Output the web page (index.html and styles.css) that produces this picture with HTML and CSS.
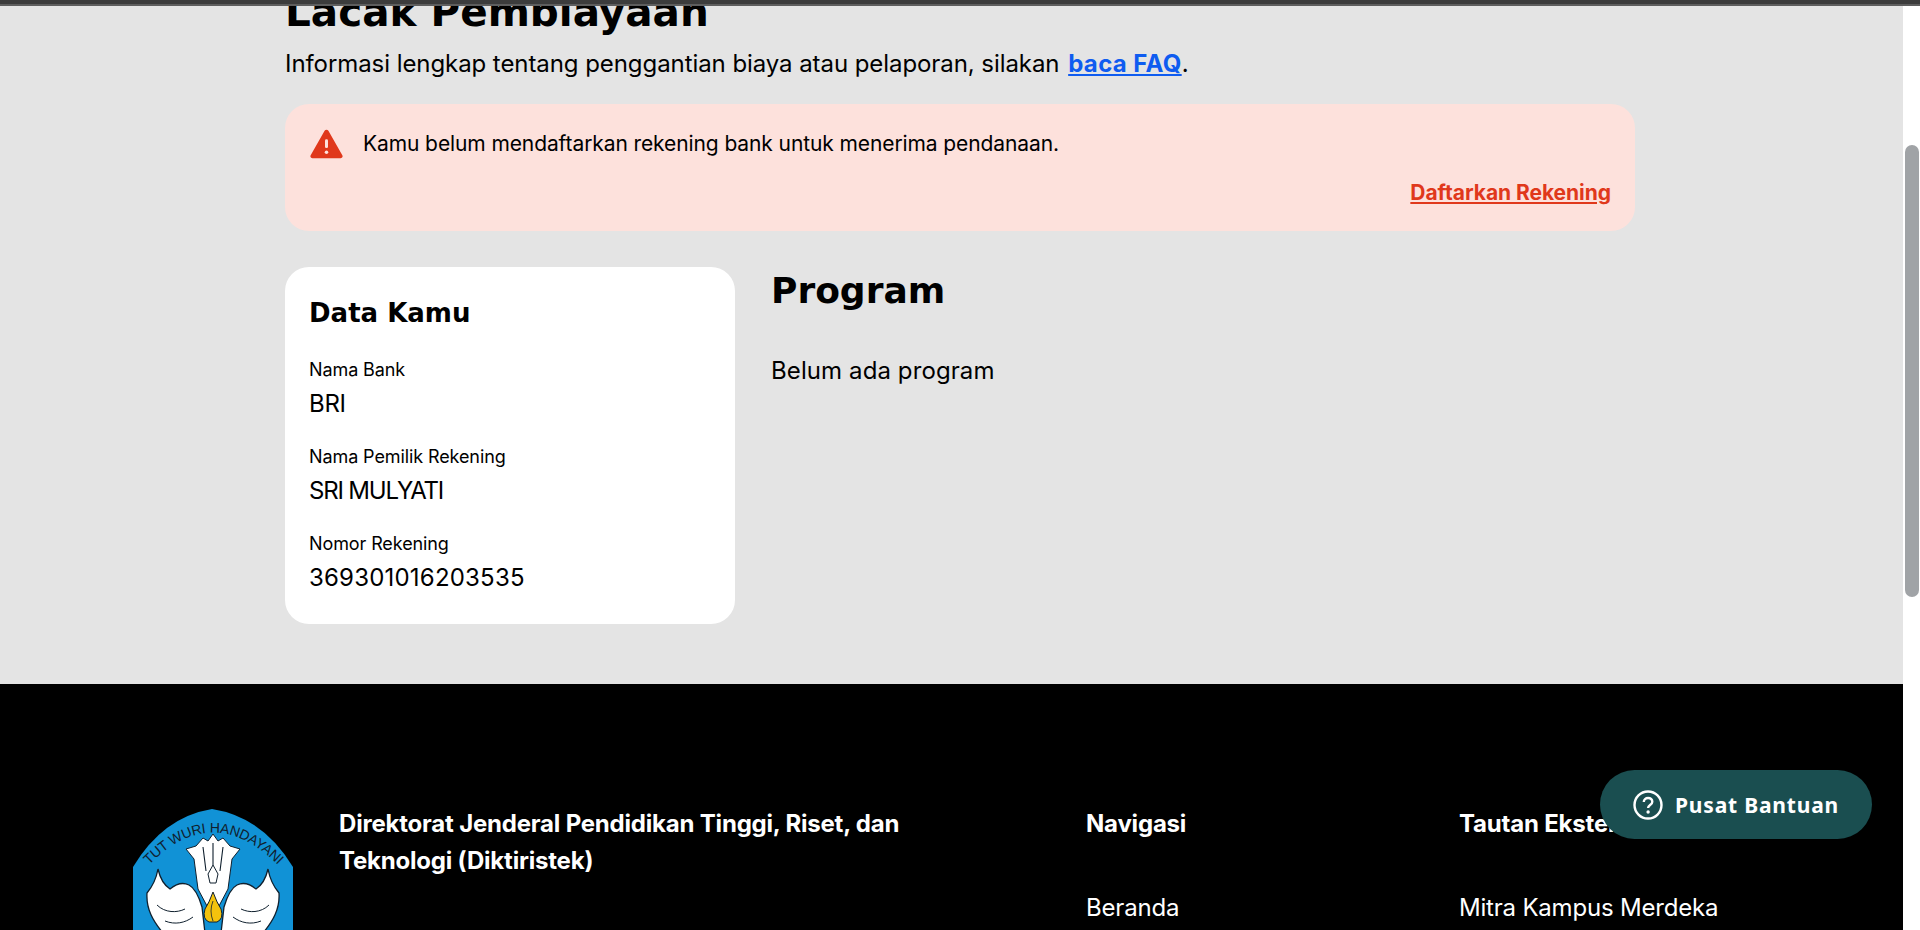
FILE: index.html
```html
<!DOCTYPE html>
<html lang="id">
<head>
<meta charset="utf-8">
<title>Lacak Pembiayaan</title>
<link rel="stylesheet" href="styles.css">
</head>
<body>
<div class="topbar"></div>
<div class="shell">
  <div class="viewport">
    <main class="content">
      <h1 class="title">Lacak Pembiayaan</h1>
      <p class="intro">Informasi lengkap tentang penggantian biaya atau pelaporan, silakan <a class="faq" href="#">baca FAQ</a>.</p>
      <section class="alert">
        <div class="alert-row">
          <svg class="alert-icon" viewBox="0 0 24 22"><path d="M12 0.5c.6 0 1.1.3 1.4.8l10.2 18c.6 1-.1 2.2-1.3 2.2H1.7C.5 21.500-.2 20.300.4 19.300l10.200-18c.3-.5.8-.8 1.400-.8z" fill="#e0381b"/><rect x="10.900" y="7.500" width="2.200" height="6.500" rx="1" fill="#fde1dc"/><circle cx="12" cy="17" r="1.300" fill="#fde1dc"/></svg>
          <span>Kamu belum mendaftarkan rekening bank untuk menerima pendanaan.</span>
        </div>
        <a class="alert-link" href="#">Daftarkan Rekening</a>
      </section>
      <div class="columns">
        <aside class="card">
          <h2 class="card-title">Data Kamu</h2>
          <dl class="fields">
            <div class="field"><dt>Nama Bank</dt><dd>BRI</dd></div>
            <div class="field"><dt>Nama Pemilik Rekening</dt><dd class="dd-name">SRI MULYATI</dd></div>
            <div class="field"><dt>Nomor Rekening</dt><dd class="dd-num">369301016203535</dd></div>
          </dl>
        </aside>
        <section class="program">
          <h2 class="program-title">Program</h2>
          <p class="program-empty">Belum ada program</p>
        </section>
      </div>
    </main>
    <footer class="footer">
      <svg class="logo" viewBox="0 0 160 170">
        <defs>
          <path id="arc" d="M15 57 Q80 -10 146 57"/>
          <g id="wing">
            <path d="M25 60 C27 69 31 76 37 80 C43 75 50 73 56 76 C62 79 66 88 69 98 L72 124 L30 124 C20 112 13 100 14 84 C19 78 23 71 25 60 Z" fill="#fff" stroke="#10202e" stroke-width="1.300"/>
            <path d="M24 96 C32 104 44 104 52 100 M32 112 C42 116 52 114 60 108" fill="none" stroke="#10202e" stroke-width="1"/>
          </g>
        </defs>
        <path d="M79 0 Q30 8 0 58 V125 Q8 165 80 170 Q152 165 160 125 V58 Q130 8 79 0 Z" fill="#1192d6"/>
        <text class="logo-text"><textPath href="#arc" startOffset="50%" text-anchor="middle">TUT WURI HANDAYANI</textPath></text>
        <use href="#wing"/>
        <use href="#wing" transform="translate(160 0) scale(-1 1)"/>
        <path d="M53 40 L63 37 L70 29 L75 32 L80 25 L85 32 L90 29 L97 37 L107 40 L99 50 L95 80 L86 97 L80 86 L74 97 L65 80 L61 50 Z" fill="#fff" stroke="#10202e" stroke-width="1"/>
        <path d="M70 38 L73 62 M80 34 V56 M90 38 L87 62" stroke="#10202e" stroke-width="1.100" fill="none"/>
        <path d="M80 56 L85 65 L83 74 L77 74 L75 65 Z" fill="#fff" stroke="#10202e" stroke-width="1"/>
        <path d="M80 83 Q84 94 88 100 Q91 110 84 113 H76 Q69 110 72 100 Q76 94 80 83 Z" fill="#f4c20d" stroke="#10202e" stroke-width="1"/>
        <path d="M80 92 Q76 102 80 112" fill="none" stroke="#10202e" stroke-width=".8"/>
      </svg>
      <div class="org">Direktorat Jenderal Pendidikan Tinggi, Riset, dan Teknologi (Diktiristek)</div>
      <nav class="foot-col nav-col">
        <h3>Navigasi</h3>
        <a href="#">Beranda</a>
      </nav>
      <nav class="foot-col ext-col">
        <h3>Tautan Eksternal</h3>
        <a href="#">Mitra Kampus Merdeka</a>
      </nav>
    </footer>
    <button class="help">
      <svg class="help-icon" viewBox="0 0 30 30"><circle cx="15" cy="15" r="13.500" fill="none" stroke="#fff" stroke-width="2.400"/><path d="M10.800 12c0-2.500 1.900-4 4.300-4s4.200 1.500 4.200 3.700c0 3.300-4.200 3.300-4.200 6.300" fill="none" stroke="#fff" stroke-width="2.400"/><circle cx="15.100" cy="22" r="1.700" fill="#fff"/></svg>
      <span class="help-label">Pusat Bantuan</span>
    </button>
  </div>
  <div class="scrollbar"><div class="thumb"></div></div>
</div>
</body>
</html>
```

FILE: styles.css
```css
* { box-sizing: border-box; }
html, body { margin: 0; height: 100%; overflow: hidden; }
body { display: flex; flex-direction: column; font-family: "Inter", "Liberation Sans", sans-serif; color: #000; background: #fff; }
.topbar { height: 6px; flex: none; background: linear-gradient(#3c3c3c 0 4px, #5e5e5e 4px); }
.shell { flex: 1; min-height: 0; display: flex; }
.viewport { position: relative; width: 1903px; overflow: hidden; background: #e4e4e4; }
.content { display: flow-root; height: 678px; padding: 0 268px 0 285px; }
.title { margin: -18px 0 0; font-family: "DejaVu Sans", sans-serif; font-size: 40.500px; line-height: 48px; font-weight: 700; }
.intro { margin: 11px 0 0; font-size: 24px; line-height: 34px; letter-spacing: -0.07px; }
.faq { margin-left: 2px; color: #0f5cf0; font-weight: 700; letter-spacing: 0.35px; }
.alert { margin-top: 23px; height: 127px; padding: 24px; background: #fde1dc; border-radius: 24px; display: flex; flex-direction: column; font-size: 21px; }
.alert-row { display: flex; align-items: center; gap: 20px; line-height: 32px; letter-spacing: -0.1px; }
.alert-icon { width: 33px; height: 30px; flex: none; margin-left: 1px; }
.alert-link { margin-top: 18px; align-self: flex-end; color: #e0381b; font-weight: 700; line-height: 30px; letter-spacing: -0.05px; }
.columns { margin-top: 36px; display: flex; gap: 36px; }
.card { width: 450px; height: 357px; padding: 25px 24px 24px; background: #fff; border-radius: 24px; }
.card-title { margin: 0; font-family: "DejaVu Sans", sans-serif; font-size: 26px; line-height: 42px; font-weight: 700; }
.fields { margin: 22px 0 0; display: flex; flex-direction: column; gap: 20px; }
.field dt { font-size: 18px; line-height: 28px; letter-spacing: -0.1px; }
.field dd { margin: 2px 0 0; font-size: 24px; line-height: 36px; letter-spacing: -0.3px; }
.field .dd-name { letter-spacing: -1.2px; }
.field .dd-num { letter-spacing: 0.2px; }
.field + .field { margin-top: 1px; }
.program { flex: 1; padding-top: 1px; }
.program-title { margin: 0; font-family: "DejaVu Sans", sans-serif; font-size: 36px; line-height: 46px; font-weight: 700; }
.program-empty { margin: 39px 0 0; font-size: 24px; line-height: 36px; letter-spacing: 0.1px; }
.footer { height: 246px; background: #000; color: #fff; padding-top: 121px; padding-left: 133px; display: flex; align-items: flex-start; }
.logo { width: 160px; height: 170px; flex: none; margin: 4px 46px 0 0; }
.logo-text { font-family: "Liberation Sans", sans-serif; font-size: 14px; letter-spacing: -0.2px; fill: #10202e; }
.org { width: 595px; margin-right: 152px; font-size: 24px; line-height: 37px; font-weight: 700; letter-spacing: -0.2px; }
.foot-col h3 { margin: 0; font-size: 24px; line-height: 37px; font-weight: 700; letter-spacing: -0.2px; }
.foot-col a { display: block; margin-top: 48px; color: #fff; text-decoration: none; font-size: 24px; line-height: 36px; letter-spacing: -0.2px; }
.nav-col { width: 373px; }
.help { position: absolute; top: 764px; left: 1600px; width: 272px; height: 69px; border: 0; border-radius: 35px; background: #1a4e50; color: #fff; display: flex; align-items: center; gap: 12px; padding: 0 33px; font-family: "Noto Sans", sans-serif; font-size: 21px; font-weight: 700; letter-spacing: 0.8px; }
.help-label { white-space: nowrap; }
.help-icon { width: 30px; height: 30px; flex: none; }
.scrollbar { flex: 1; background: #fff; padding: 139px 1px 0 2px; }
.thumb { height: 452px; background: #a0a3a6; border-radius: 7px; }
```
